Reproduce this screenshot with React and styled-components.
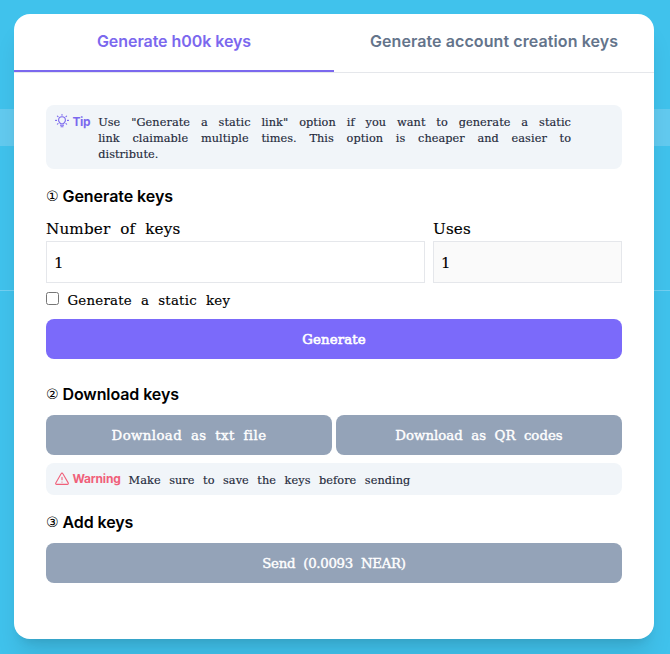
import React from 'react';
import styled, { createGlobalStyle } from 'styled-components';

const heading = '"Inter", "Liberation Sans", sans-serif';
const slab = '"DejaVu Serif", serif';

const GlobalStyle = createGlobalStyle`
  *, *::before, *::after { box-sizing: border-box; }
  body { margin: 0; overflow: hidden; }
`;

const Page = styled.main`
  height: 654px;
  padding: 14px 16px 15px 14px;
  background:
    linear-gradient(#72cff1, #72cff1) 0 290px / 100% 1px no-repeat,
    linear-gradient(#62caef, #62caef) 0 109px / 100% 37px no-repeat,
    #40c2ec;
`;

const Card = styled.section`
  height: 625px;
  border-radius: 16px;
  background: #fff;
  box-shadow: 0 20px 25px -5px rgba(0, 0, 0, 0.1), 0 8px 10px -6px rgba(0, 0, 0, 0.1);
`;

const Tabs = styled.nav`
  display: flex;
  height: 59px;
  border-bottom: 1px solid #e5e7eb;
`;

const Tab = styled.button`
  flex: 1;
  height: ${(p) => (p.$active ? 58 : 56)}px;
  padding: 0 0 2px;
  border: 0;
  border-bottom: ${(p) => (p.$active ? '2px solid #7b68ee' : '0')};
  background: none;
  color: ${(p) => (p.$active ? '#7b68ee' : '#64748b')};
  font: 600 16px/54px ${heading};
  letter-spacing: ${(p) => p.$track || 0}px;
  white-space: nowrap;
`;

const Content = styled.div`
  display: flex;
  flex-direction: column;
  padding: 32px;
`;

const Notice = styled.div`
  display: flex;
  align-items: flex-start;
  gap: 8px;
  padding: 9px 51px 7px 9px;
  border-radius: 8px;
  background: #f1f5f9;
  color: #1e293b;
`;

const NoticeLabel = styled.span`
  display: flex;
  align-items: center;
  gap: 4px;
  height: 14px;
  color: ${(p) => p.$color};
  font: 700 12px/14px ${heading};
  letter-spacing: ${(p) => p.$track}px;
  svg { display: block; flex: none; }
`;

const LabelText = styled.span`
  padding-top: ${(p) => p.$drop || 0}px;
  margin-left: -0.5px;
`;

const NoticeText = styled.p`
  flex: 1;
  margin: 1px 0 -1px;
  font: 11.3px/16px ${slab};
  letter-spacing: 0.07px;
  word-spacing: 4.8px;
  text-align: justify;
  -webkit-text-stroke: 0.15px currentColor;
`;

const Title = styled.h2`
  display: flex;
  align-items: center;
  gap: 4px;
  height: 24px;
  margin: ${(p) => p.$top}px 0 0;
  padding-bottom: 2px;
  color: #000;
  font: 600 16px/22px ${heading};
  letter-spacing: ${(p) => p.$track || 0}px;
`;

const StepNumber = styled.span`
  width: 12.5px;
  font: 400 14px/22px "DejaVu Sans", sans-serif;
  letter-spacing: 0;
`;

const Fields = styled.div`
  display: grid;
  grid-template-columns: 379px 189px;
  gap: 8px;
  margin-top: 8px;
`;

const Field = styled.label`
  display: flex;
  flex-direction: column;
  color: #000;
  font: 15.2px/24px ${slab};
  letter-spacing: 0.14px;
  word-spacing: 5px;
  -webkit-text-stroke: 0.15px currentColor;
`;

const FieldName = styled.span`
  height: 24px;
  line-height: 25px;
`;

const Input = styled.input`
  width: 100%;
  height: 42px;
  padding: 1px 7px 0;
  border: 1px solid #e5e7eb;
  border-radius: 0;
  background: ${(p) => (p.readOnly ? '#fafafa' : '#fff')};
  color: #000;
  font: 15px/24px ${slab};
  outline: none;
`;

const CheckRow = styled.label`
  display: flex;
  align-items: center;
  gap: 8px;
  height: 20px;
  margin-top: 7px;
  color: #000;
  font: 13.3px/22px ${slab};
  letter-spacing: 0.25px;
  word-spacing: 4.6px;
  -webkit-text-stroke: 0.15px currentColor;
`;

const Checkbox = styled.input`
  width: 13px;
  height: 13px;
  margin: 0 0.5px 3px 0;
`;

const CheckText = styled.span`
  padding-top: 2px;
`;

const Button = styled.button`
  flex: 1;
  height: 40px;
  min-height: 40px;
  padding: 2px 0 0;
  border: 0;
  border-radius: 8px;
  background: ${(p) => (p.$primary ? '#7b6afa' : '#94a3b8')};
  color: #fff;
  font: 13.3px/20px ${slab};
  letter-spacing: ${(p) => p.$track}px;
  word-spacing: 4.2px;
  -webkit-text-stroke: ${(p) => (p.$primary ? 0.6 : 0.4)}px #fff;
`;

const ButtonRow = styled.div`
  display: flex;
  gap: 4px;
  margin: ${(p) => p.$margin};
`;

const BulbIcon = () => (
  <svg width="14" height="14" viewBox="0 0 14 14" fill="none" stroke="currentColor" strokeWidth="1.1" strokeLinecap="round" strokeLinejoin="round">
    <path d="M5.4 9.8C5.4 8.8 3.6 8.2 3.6 6.2a3.4 3.4 0 0 1 6.8 0c0 2-1.8 2.6-1.8 3.6zM5.5 11.2h3M6 12.7h2" />
    <path d="M7 .5v.8M2.4 2.1l.6.6M11.6 2.1l-.6.6M.6 6.4h.9M12.5 6.4h.9M2.4 10.2l.6-.5M11.6 10.2l-.6-.5" />
  </svg>
);

const WarningIcon = () => (
  <svg width="14" height="14" viewBox="0 0 14 14" fill="none" stroke="currentColor" strokeWidth="1.1" strokeLinecap="round" strokeLinejoin="round">
    <path d="M6.1 1.7.8 10.9a1 1 0 0 0 .9 1.5h10.6a1 1 0 0 0 .9-1.5L7.9 1.7a1 1 0 0 0-1.8 0zM7 5.2v2.6M7 10v.1" />
  </svg>
);

export default function App() {
  return (
    <>
      <GlobalStyle />
      <Page>
        <Card>
          <Tabs>
            <Tab $active $track={-0.06}>Generate h00k keys</Tab>
            <Tab $track={0.09}>Generate account creation keys</Tab>
          </Tabs>
          <Content>
            <Notice>
              <NoticeLabel $color="#7b68ee" $track={-0.4}><BulbIcon /><LabelText $drop={2}>Tip</LabelText></NoticeLabel>
              <NoticeText>
                Use "Generate a static link" option if you want to generate a static link claimable
                multiple times. This option is cheaper and easier to distribute.
              </NoticeText>
            </Notice>
            <Title $top={16} $track={-0.05}><StepNumber>①</StepNumber>Generate keys</Title>
            <Fields>
              <Field><FieldName>Number of keys</FieldName><Input defaultValue="1" /></Field>
              <Field><FieldName>Uses</FieldName><Input value="1" readOnly /></Field>
            </Fields>
            <CheckRow><Checkbox type="checkbox" /><CheckText>Generate a static key</CheckText></CheckRow>
            <ButtonRow $margin="9px 0 0"><Button $primary $track={0.15}>Generate</Button></ButtonRow>
            <Title $top={24} $track={-0.1}><StepNumber>②</StepNumber>Download keys</Title>
            <ButtonRow $margin="8px 0">
              <Button $track={0.4}>Download as txt file</Button>
              <Button $track={0.02}>Download as QR codes</Button>
            </ButtonRow>
            <Notice>
              <NoticeLabel $color="#f0607a" $track={-0.2}><WarningIcon /><LabelText>Warning</LabelText></NoticeLabel>
              <NoticeText>Make sure to save the keys before sending</NoticeText>
            </Notice>
            <Title $top={16} $track={-0.1}><StepNumber>③</StepNumber>Add keys</Title>
            <ButtonRow $margin="8px 0 0"><Button $track={-0.3}>Send (0.0093 NEAR)</Button></ButtonRow>
          </Content>
        </Card>
      </Page>
    </>
  );
}
